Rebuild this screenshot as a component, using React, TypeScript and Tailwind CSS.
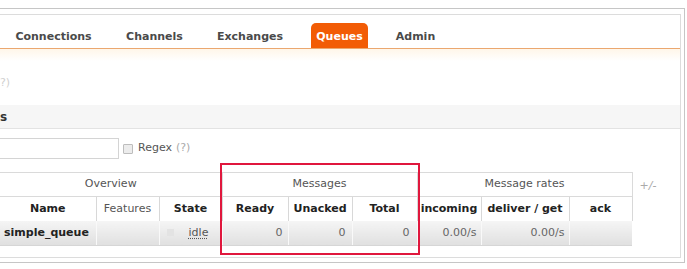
import React from "react";

const tabs = [
  { label: "Connections", w: "w-[89px]" },
  { label: "Channels", w: "w-[69px]" },
  { label: "Exchanges", w: "w-[78px]" },
  { label: "Queues", w: "w-[57px]", active: true },
  { label: "Admin", w: "w-[51px]" },
];

export default function App() {
  return (
    <div className="relative w-[687px] h-[269px] overflow-hidden bg-white font-['DejaVu_Sans',Verdana,sans-serif] text-[11px]">
      {/* outer frame */}
      <div className="mt-[8px] w-[685px] h-[255px] border-t border-r border-b border-[#c6c6c6]">
        {/* inner frame */}
        <div className="mt-[5px] w-[681px] h-[244px] border-t border-r border-b border-[#dcdcdc] overflow-hidden">
          {/* nav */}
          <div className="h-[34px] flex items-end gap-[22px] pl-[9px] border-b border-[#eba76f]">
            {tabs.map((t) => (
              <div
                key={t.label}
                className={`${t.w} h-[25px] pt-[4px] flex items-center justify-center font-bold rounded-t-[5px] ${
                  t.active ? "bg-[#f25c05] text-white" : "text-[#4a4a4a]"
                }`}
              >
                {t.label}
              </div>
            ))}
          </div>
          <div className="h-[12px] bg-gradient-to-b from-[#fff6e9] to-white" />

          <div className="mt-[16px] h-[12px] leading-[12px] text-[#d0d0d0]">?)</div>

          {/* section bar */}
          <div className="mt-[16px] h-[24px] flex items-center bg-[#f6f6f6] border-b border-[#e3e3e3] font-bold text-[#333] text-[12px]">
            s
          </div>

          {/* filter */}
          <div className="mt-[9px] flex items-center h-[21px]">
            <div className="w-[119px] h-[21px] border border-[#d4d4d4] border-l-0 bg-white" />
            <div className="ml-[4px] w-[10px] h-[10px] border border-[#bdbdbd] bg-[#ececec] rounded-[1px]" />
            <span className="ml-[5px] text-[#555]">Regex</span>
            <span className="ml-[4px] text-[#aaa]">(?)</span>
          </div>

          {/* table */}
          <table className="mt-[13px] border-collapse table-fixed">
            <colgroup>
              <col className="w-[96px]" />
              <col className="w-[63px]" />
              <col className="w-[63px]" />
              <col className="w-[66px]" />
              <col className="w-[64px]" />
              <col className="w-[65px]" />
              <col className="w-[64px]" />
              <col className="w-[88px]" />
              <col className="w-[63px]" />
              <col className="w-[40px]" />
            </colgroup>
            <thead>
              <tr className="h-[24px]">
                <th colSpan={3} className="font-normal text-[#555] border-t border-r border-b border-[#dadada]">
                  Overview
                </th>
                <th colSpan={3} className="font-normal text-[#555] border border-[#dadada]">
                  Messages
                </th>
                <th colSpan={3} className="font-normal text-[#555] border border-[#dadada]">
                  Message rates
                </th>
                <th className="text-left pl-[7px] pt-[3px] font-normal italic text-[#aaa]">+/-</th>
              </tr>
              <tr className="h-[24px] text-[#222]">
                <th className="font-bold">Name</th>
                <th className="font-normal text-[#555] border-l border-[#d8d8d8]">Features</th>
                <th className="font-bold border-l border-[#d8d8d8]">State</th>
                <th className="font-bold border-l border-[#d8d8d8]">Ready</th>
                <th className="font-bold border-l border-[#d8d8d8]">Unacked</th>
                <th className="font-bold border-l border-[#d8d8d8]">Total</th>
                <th className="font-bold border-l border-[#d8d8d8]">incoming</th>
                <th className="font-bold border-l border-[#d8d8d8]">deliver / get</th>
                <th className="font-bold border-x border-[#d8d8d8]">ack</th>
                <th />
              </tr>
            </thead>
            <tbody>
              <tr className="h-[25px] text-[#666]">
                <td className="bg-gradient-to-b from-[#f5f5f5] to-[#e0e0e0] border-b border-[#d6d6d6] pl-[4px] font-bold text-[#222]">
                  simple_queue
                </td>
                <td className="bg-gradient-to-b from-[#f5f5f5] to-[#e0e0e0] border-b border-l border-[#d6d6d6] border-l-[#f9f9f9]" />
                <td className="bg-gradient-to-b from-[#f5f5f5] to-[#e0e0e0] border-b border-l border-[#d6d6d6] border-l-[#f9f9f9]">
                  <div className="flex items-center justify-center gap-[15px] pr-[6px]">
                    <span className="w-[7px] h-[7px] bg-[#e3e3e3]" />
                    <span className="underline decoration-dotted underline-offset-2 text-[#555]">idle</span>
                  </div>
                </td>
                <td className="bg-gradient-to-b from-[#f5f5f5] to-[#e0e0e0] border-b border-l border-[#d6d6d6] border-l-[#f9f9f9] text-right pr-[5px]">0</td>
                <td className="bg-gradient-to-b from-[#f5f5f5] to-[#e0e0e0] border-b border-l border-[#d6d6d6] border-l-[#f9f9f9] text-right pr-[6px]">0</td>
                <td className="bg-gradient-to-b from-[#f5f5f5] to-[#e0e0e0] border-b border-l border-[#d6d6d6] border-l-[#f9f9f9] text-right pr-[7px]">0</td>
                <td className="bg-gradient-to-b from-[#f5f5f5] to-[#e0e0e0] border-b border-l border-[#d6d6d6] border-l-[#f9f9f9] text-right pr-[4px]">0.00/s</td>
                <td className="bg-gradient-to-b from-[#f5f5f5] to-[#e0e0e0] border-b border-l border-[#d6d6d6] border-l-[#f9f9f9] text-right pr-[4px]">0.00/s</td>
                <td className="bg-gradient-to-b from-[#f5f5f5] to-[#e0e0e0] border-b border-l border-[#d6d6d6] border-l-[#f9f9f9]" />
                <td />
              </tr>
            </tbody>
          </table>
        </div>
      </div>

      {/* red highlight annotation */}
      <div className="absolute left-[220px] top-[163px] w-[200px] h-[92px] border-2 border-[#e0173d]" />
    </div>
  );
}
